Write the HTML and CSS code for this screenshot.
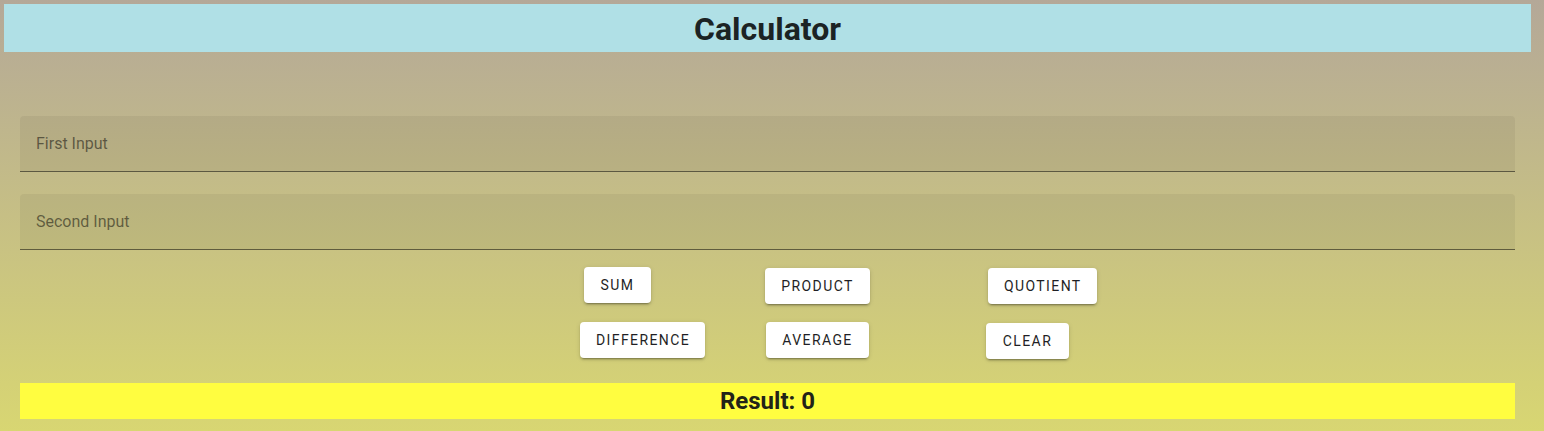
FILE: index.html
```html
<!DOCTYPE html>
<html lang="en">
<head>
<meta charset="utf-8">
<title>Calculator</title>
<link rel="stylesheet" href="styles.css">
</head>
<body>
<div class="page">
  <header class="header"><h1 class="title">Calculator</h1></header>
  <main class="content">
    <div class="field field-first"><label class="field-label">First Input</label></div>
    <div class="field field-second"><label class="field-label">Second Input</label></div>
    <div class="buttons">
      <div class="btn-row row-one">
        <button class="btn btn-sum">Sum</button>
        <button class="btn btn-product">Product</button>
        <button class="btn btn-quotient">Quotient</button>
      </div>
      <div class="btn-row row-two">
        <button class="btn btn-difference">Difference</button>
        <button class="btn btn-average">Average</button>
        <button class="btn btn-clear">Clear</button>
      </div>
    </div>
    <div class="result">Result: 0</div>
  </main>
</div>
</body>
</html>
```
FILE: styles.css
```css
html, body {
  margin: 0;
  padding: 0;
  height: 100%;
}
body {
  background: linear-gradient(180deg, #b4a898 0%, #d8d672 100%);
  font-family: Roboto, "Liberation Sans", Arial, sans-serif;
  overflow: hidden;
}
.page {
  width: 1535px;
  padding-top: 4px;
}
.header {
  margin: 0 4px;
  height: 48px;
  background: #b0e0e6;
  display: flex;
  align-items: center;
  justify-content: center;
}
.title {
  margin: 0;
  font-size: 32px;
  font-weight: 700;
  color: #1b2324;
  line-height: 1;
  padding-top: 1px;
}
.content {
  padding: 64px 20px 0;
}
.field {
  height: 55px;
  background: rgba(0, 0, 0, 0.05);
  border-bottom: 1px solid rgba(0, 0, 0, 0.5);
  border-radius: 4px 4px 0 0;
  display: flex;
  align-items: center;
  padding-left: 16px;
}
.field-second {
  margin-top: 22px;
}
.field-label {
  font-size: 16px;
  color: rgba(0, 0, 0, 0.5);
}
.buttons {
  padding-top: 17px;
}
.btn-row {
  display: flex;
  align-items: flex-start;
}
.row-one {
  padding-left: 564px;
  height: 55px;
}
.row-two {
  padding-left: 560px;
  height: 61px;
}
.btn {
  font-family: Roboto, "Liberation Sans", Arial, sans-serif;
  font-size: 14px;
  font-weight: 400;
  letter-spacing: 0.1em;
  text-transform: uppercase;
  color: #1f1f25;
  background: #fff;
  border: none;
  border-radius: 4px;
  height: 36px;
  padding: 0 16px;
  min-width: 64px;
  box-shadow: 0 3px 1px -2px rgba(0,0,0,0.2), 0 2px 2px 0 rgba(0,0,0,0.14), 0 1px 5px 0 rgba(0,0,0,0.12);
}
.btn-sum { width: 67px; }
.btn-product { width: 105px; margin-left: 114px; margin-top: 1px; }
.btn-quotient { width: 109px; margin-left: 118px; margin-top: 1px; }
.btn-difference { width: 125px; }
.btn-average { width: 103px; margin-left: 61px; }
.btn-clear { width: 83px; margin-left: 117px; margin-top: 1px; }
.result {
  height: 36px;
  background: #fffd40;
  display: flex;
  align-items: center;
  justify-content: center;
  font-size: 24px;
  font-weight: 700;
  color: #222318;
}
```
